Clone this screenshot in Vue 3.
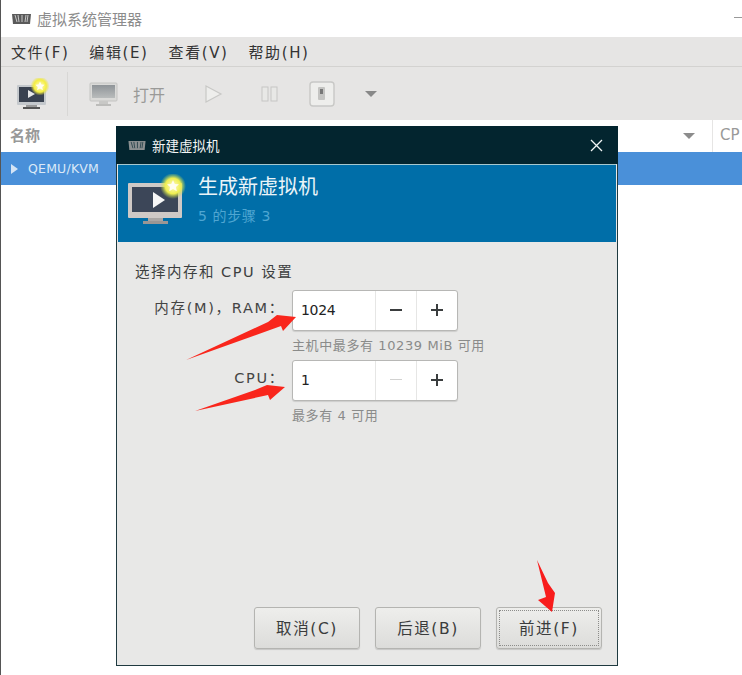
<script setup>
const menus = ['文件(F)', '编辑(E)', '查看(V)', '帮助(H)']
const spins = [
  { label: '内存(M)，RAM：', value: '1024', hint: '主机中最多有 10239 MiB 可用', minusOff: false },
  { label: 'CPU：', value: '1', hint: '最多有 4 可用', minusOff: true }
]
const buttons = ['取消(C)', '后退(B)', '前进(F)']
</script>

<template>
  <div class="app">
    <header class="titlebar">
      <svg class="vmm" width="19" height="10" viewBox="0 0 19 10"><path d="M0 0h19l-1 10H1z" fill="#5a5a5a"/><path d="M3 1l2 7M6 1l1 7M10 1v7M14 1l-1 7M16 1l-1 7" stroke="#c8c8c8" stroke-width="1"/></svg>
      <span class="title">虚拟系统管理器</span>
      <span class="minimize"></span>
    </header>
    <nav class="menubar">
      <span v-for="m in menus" :key="m" class="menu">{{ m }}</span>
    </nav>
    <div class="toolbar">
      <svg class="new-icon" width="34" height="32" viewBox="0 0 34 32">
        <defs>
          <radialGradient id="g1"><stop offset="0" stop-color="#fffbd0"/><stop offset=".65" stop-color="#f4ee40"/><stop offset="1" stop-color="#e8e040" stop-opacity="0"/></radialGradient>
        </defs>
        <rect x="1" y="7" width="29" height="20" rx="1" fill="#c4c8cc"/>
        <rect x="3" y="9" width="25" height="15" fill="#3a4250"/>
        <path d="M12 12l7 4-7 4z" fill="#e8e8e8"/>
        <rect x="10" y="27" width="11" height="2" fill="#9a9a9a"/><rect x="7" y="29" width="17" height="2" fill="#555"/>
        <circle cx="24" cy="8" r="9.5" fill="url(#g1)"/>
        <path d="M24 3.5l1.4 3 3.2.3-2.4 2.2.7 3.2-2.9-1.7-2.9 1.7.7-3.2-2.4-2.2 3.2-.3z" fill="#fffdf0"/>
      </svg>
      <span class="sep"></span>
      <svg class="open-icon" width="30" height="28" viewBox="0 0 30 28">
        <defs><linearGradient id="g3" x1="0" y1="0" x2="0" y2="1"><stop offset="0" stop-color="#8f9498"/><stop offset="1" stop-color="#b9bcbc"/></linearGradient></defs>
        <rect x="1" y="3" width="27" height="18" rx="1" fill="#dadad8" stroke="#c4c4c2"/>
        <rect x="3" y="5" width="23" height="13" fill="url(#g3)"/>
        <rect x="10" y="21" width="9" height="3" fill="#c8c8c6"/><rect x="7" y="24" width="15" height="2" fill="#bcbcba"/>
      </svg>
      <span class="open-label">打开</span>
      <svg class="play" width="20" height="20" viewBox="0 0 20 20"><path d="M2 2l15 8-15 8z" fill="#eeeeec" stroke="#c8c8c6" stroke-width="1.2"/></svg>
      <svg class="pause" width="18" height="16" viewBox="0 0 18 16"><rect x="1" y="1" width="6" height="14" fill="#e8e8e6" stroke="#c6c6c4"/><rect x="10" y="1" width="6" height="14" fill="#e8e8e6" stroke="#c6c6c4"/></svg>
      <svg class="power" width="26" height="26" viewBox="0 0 26 26"><rect x="1" y="1" width="24" height="24" rx="3" fill="#eeeeec" stroke="#c8c8c6" stroke-width="1.4"/><rect x="9" y="6" width="7" height="13" rx="1" fill="#c4c4c2"/><rect x="11" y="8" width="3" height="5" fill="#777"/></svg>
      <span class="caret toolbar-caret"></span>
    </div>
    <div class="list-header">
      <span class="col-name">名称</span>
      <span class="caret head-caret"></span>
      <span class="col-cpu">CP</span>
    </div>
    <div class="list-row">
      <span class="expander"></span>
      <span>QEMU/KVM</span>
    </div>

    <section class="dialog">
      <div class="dialog-title">
        <svg width="18" height="9" viewBox="0 0 19 10"><path d="M0 0h19l-1 10H1z" fill="#8a8f90"/><path d="M3 1l2 7M6 1l1 7M10 1v7M14 1l-1 7M16 1l-1 7" stroke="#2a454d" stroke-width="1"/></svg>
        <span class="dialog-name">新建虚拟机</span>
        <svg class="close" width="13" height="13" viewBox="0 0 13 13"><path d="M1 1l11 11M12 1L1 12" stroke="#f2f6f6" stroke-width="1.3"/></svg>
      </div>
      <div class="banner">
        <svg class="banner-icon" width="60" height="54" viewBox="0 0 60 54">
          <defs>
            <radialGradient id="g2"><stop offset="0" stop-color="#fffbc8"/><stop offset=".6" stop-color="#eeee50"/><stop offset="1" stop-color="#b8d850" stop-opacity="0"/></radialGradient>
          </defs>
          <rect x="1" y="9" width="54" height="35" rx="1" fill="#cfc9c6"/>
          <rect x="5" y="13" width="46" height="25" fill="#3c4658"/>
          <path d="M26 18l12 8-12 8z" fill="#f6f6f6"/>
          <rect x="21" y="44" width="15" height="3" fill="#aaa6a4"/><rect x="16" y="47" width="25" height="3" fill="#9a9694"/>
          <circle cx="46" cy="12" r="13" fill="url(#g2)"/>
          <path d="M46 6l1.8 3.9 4.2.4-3.1 2.8.9 4.1-3.8-2.2-3.8 2.2.9-4.1-3.1-2.8 4.2-.4z" fill="#fffdf0"/>
        </svg>
        <div class="banner-text">
          <div class="banner-title">生成新虚拟机</div>
          <div class="banner-step">5 的步骤 3</div>
        </div>
      </div>
      <div class="body">
        <div class="heading">选择内存和 CPU 设置</div>
        <div class="form">
          <template v-for="s in spins" :key="s.label">
            <label class="label">{{ s.label }}</label>
            <div class="spin">
              <span class="value">{{ s.value }}</span>
              <span class="step" :class="{ off: s.minusOff }"><i class="minus"></i></span>
              <span class="step"><i class="minus"></i><i class="plus"></i></span>
            </div>
            <div class="hint">{{ s.hint }}</div>
          </template>
        </div>
        <div class="actions">
          <button v-for="(b, i) in buttons" :key="b" class="btn" :class="{ focus: i === 2 }"><span>{{ b }}</span></button>
        </div>
      </div>
    </section>

    <svg class="arrows" width="742" height="675" viewBox="0 0 742 675">
      <path d="M186 360L268 322L277 315L296 317L283 331L281 326Z" fill="#f9261c"/>
      <path d="M195 411L255 390L267 385L285 387L270 400L268 395Z" fill="#f9261c"/>
      <path d="M537 560L548 583L555 593L552 612L538 600L546 597Z" fill="#f81c1c"/>
    </svg>
  </div>
</template>

<style scoped>
.app {
  position: relative;
  width: 742px;
  height: 675px;
  overflow: hidden;
  background: #fff;
  border-left: 1px solid #555;
  box-sizing: border-box;
  font-family: "DejaVu Sans", "Noto Sans CJK SC", sans-serif;
  color: #2e3436;
}
.titlebar { height: 37px; display: flex; align-items: center; padding-left: 11px; background: #fff; }
.vmm { margin-right: 6px; }
.title { font-size: 15px; color: #8c8c8c; }
.minimize { position: absolute; right: 0; top: 17px; width: 8px; height: 1px; background: #999; }
.menubar {
  height: 30px; display: flex; align-items: center; gap: 20px; padding-left: 10px;
  background: #e6e5e4; border-bottom: 1px solid #d3d2d0; box-sizing: border-box; font-size: 15px; color: #333;
}
.menu { white-space: nowrap; letter-spacing: 1.6px; }
.toolbar { height: 53px; display: flex; align-items: center; background: #e6e5e4; color: #9a9a98; }
.new-icon { margin-left: 15px; }
.sep { width: 1px; height: 44px; background: #d8d7d5; margin: 0 21px 0 17px; }
.open-label { margin-left: 14px; font-size: 16px; }
.play { margin-left: 39px; }
.pause { margin-left: 37px; }
.power { margin-left: 30px; }
.caret { width: 0; height: 0; border-left: 6px solid transparent; border-right: 6px solid transparent; border-top: 6px solid #888; }
.toolbar-caret { margin-left: 30px; }
.list-header { height: 32px; display: flex; align-items: center; padding-left: 9px; background: #fff; color: #999; font-size: 15px; font-weight: 700; }
.col-name { flex: 1; margin-top: -4px; }
.head-caret { margin-right: 17px; border-top-color: #8c8c8c; }
.col-cpu { width: 30px; height: 32px; line-height: 30px; padding-left: 7px; border-left: 1px solid #e6e5e4; box-sizing: border-box; overflow: hidden; font-weight: 400; font-size: 15px; }
.list-row { height: 33px; display: flex; align-items: center; gap: 10px; padding-left: 10px; background: #4a90d9; color: #dbe9f7; font-size: 12.5px; letter-spacing: .2px; }
.expander { width: 0; height: 0; border-left: 7px solid #d4e4f5; border-top: 5px solid transparent; border-bottom: 5px solid transparent; }

.dialog {
  position: absolute; left: 115px; top: 126px; width: 502px; height: 540px;
  display: flex; flex-direction: column; box-sizing: border-box;
  background: #e8e8e7; border: 1px solid #1f3a40; border-top: 0;
}
.dialog-title { height: 38px; margin: 0 -1px; display: flex; align-items: center; padding-left: 12px; background: #03252f; color: #f3f5f5; font-size: 13.5px; flex: none; }
.dialog-name { margin-left: 6px; }
.close { margin-left: auto; margin-right: 15px; }
.banner {
  height: 78px; flex: none; margin: 0 1px; display: flex; background: #006ea8;
  border-top: 1px solid #a6c8cf; box-sizing: border-box; color: #eaf4f8;
}
.banner-icon { margin: 9px 0 0 9px; }
.banner-text { margin-left: 11px; padding-top: 8px; }
.banner-title { font-size: 20px; line-height: 28px; }
.banner-step { margin-top: 4px; font-size: 14px; color: #4fa6d2; letter-spacing: .6px; }
.body { flex: 1; display: flex; flex-direction: column; padding: 19px 15px 15px 18px; min-height: 0; }
.heading { font-size: 14.5px; line-height: 22px; color: #3c3f40; letter-spacing: 1.5px; white-space: nowrap; }
.form { display: grid; grid-template-columns: 157px 166px; margin-top: 7px; }
.label { text-align: right; font-size: 14.5px; color: #444; margin-top: 6px; white-space: nowrap; letter-spacing: 1.7px; padding-right: 7px; box-sizing: border-box; }
.spin {
  height: 41px; display: flex; background: #fff; border: 1px solid #b7b7b5; border-radius: 3px;
  box-sizing: border-box; box-shadow: 0 1px 1px rgba(0,0,0,.12);
}
.value { flex: 1; padding-left: 8px; line-height: 38px; font-size: 14px; letter-spacing: -.3px; color: #222; }
.step { width: 41px; position: relative; border-left: 1px solid #e6e6e5; box-sizing: border-box; }
.minus, .plus { position: absolute; left: 14px; top: 18px; width: 12px; height: 2px; background: #3a3d3e; }
.plus { left: 19px; top: 13px; width: 2px; height: 12px; }
.step.off .minus { background: #d2d2d1; height: 1px; }
.hint { grid-column: 2; height: 29px; font-size: 13px; line-height: 29px; color: #8a8b8a; white-space: nowrap; letter-spacing: .6px; }
.actions { margin-top: auto; margin-bottom: 1px; display: flex; justify-content: flex-end; gap: 15px; }
.btn {
  width: 106px; height: 42px; padding: 0 0 3px; font: inherit; font-size: 15.5px; color: #3a3c3c; letter-spacing: 1.6px;
  border: 1px solid #b4b4b1; border-radius: 3px; box-shadow: 0 1px 1px rgba(0,0,0,.15);
  background: linear-gradient(#eeeeec, #dcdcda);
}
.btn.focus { outline: 1px dotted #8c8c8a; outline-offset: -4px; }
.arrows { position: absolute; left: -1px; top: 0; pointer-events: none; }
</style>
